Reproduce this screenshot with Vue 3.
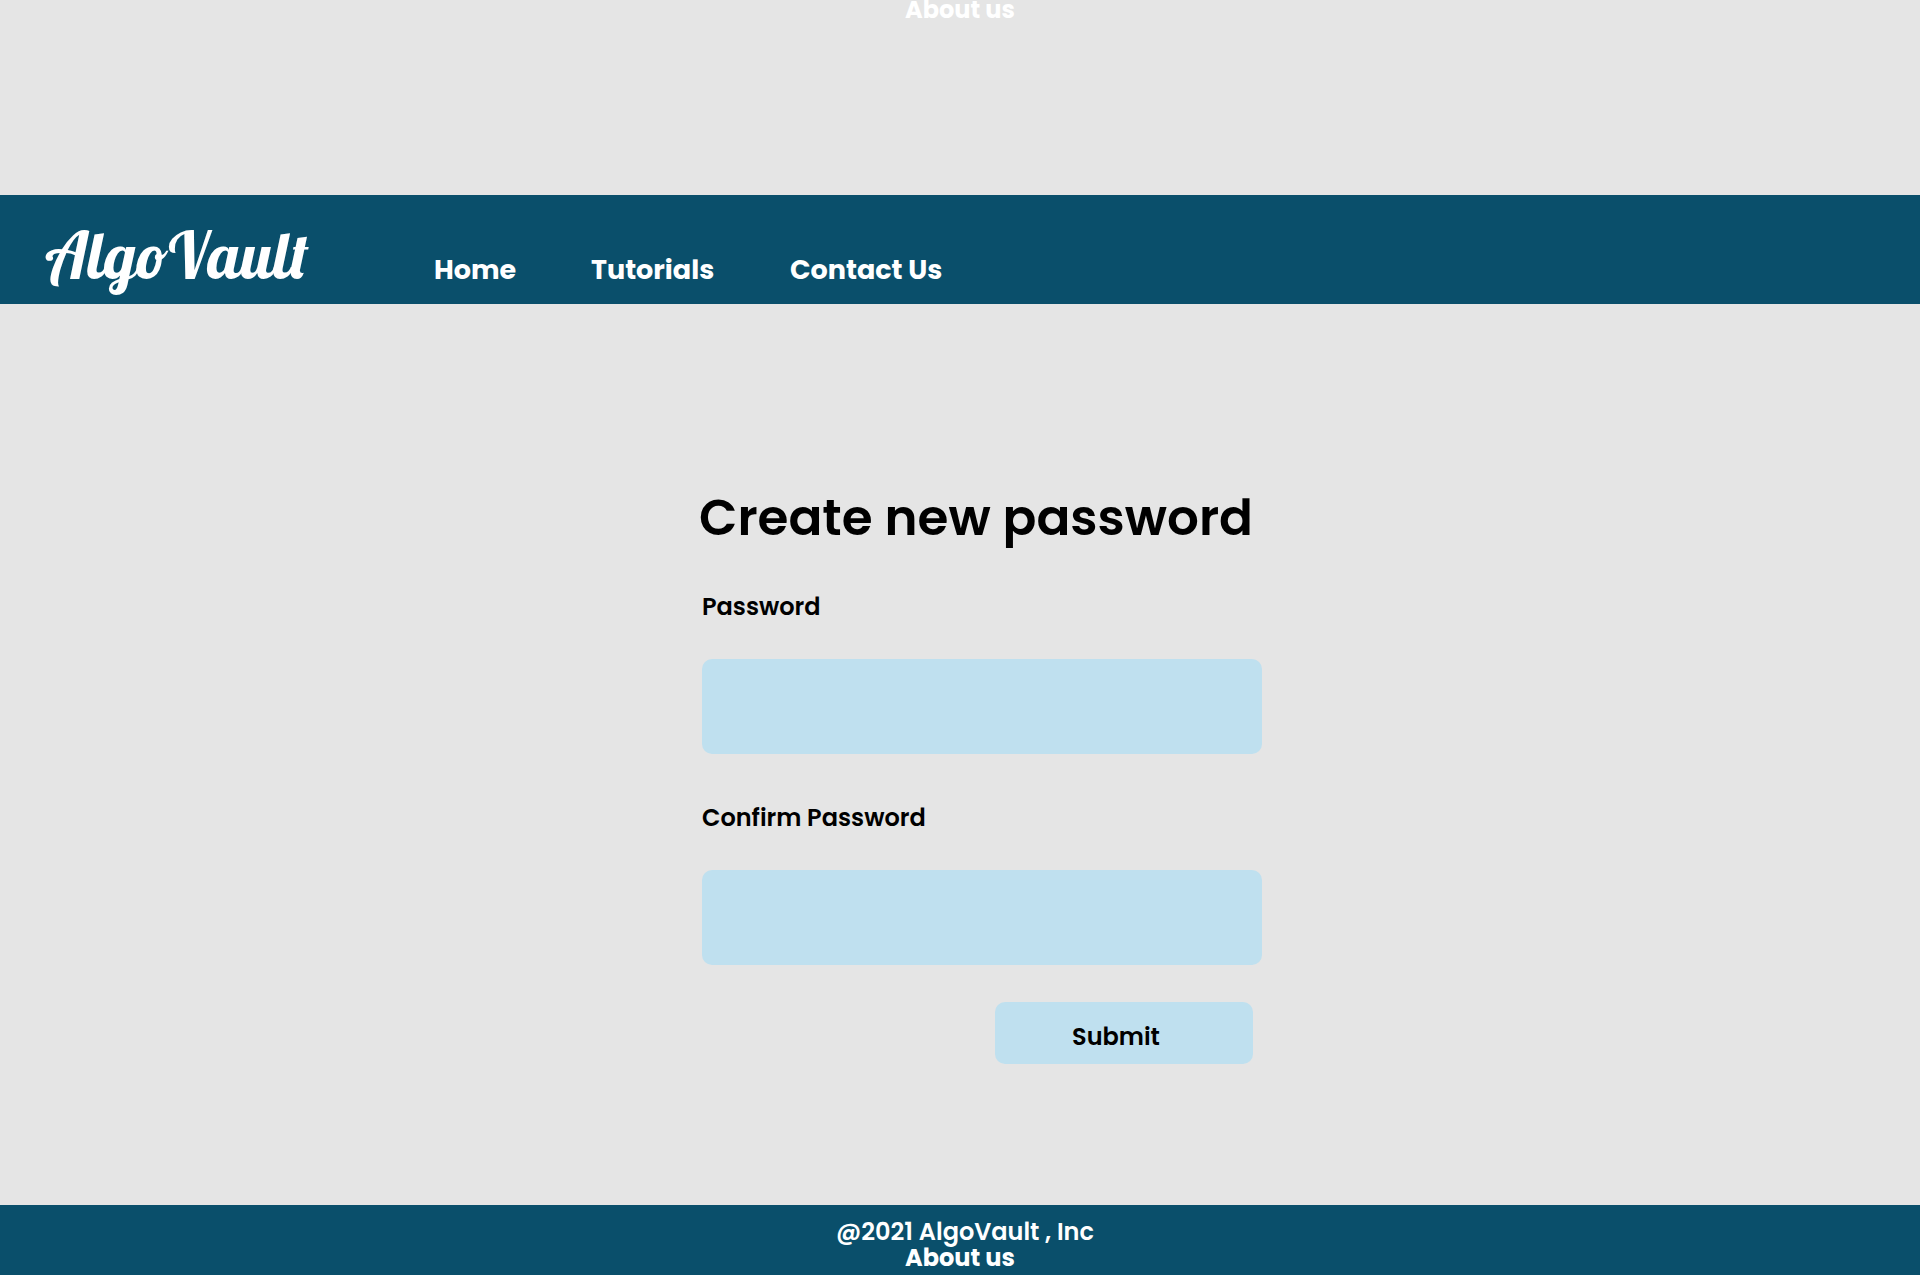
<script setup>
import { ref } from 'vue'

const links = ['Home', 'Tutorials', 'Contact Us']
const password = ref('')
const confirmation = ref('')
</script>

<template>
  <div class="page">
    <a class="about top-about" href="#about">About us</a>

    <header class="header">
      <a class="logo" href="#home">AlgoVault</a>
      <nav class="nav" aria-label="Main">
        <a v-for="link in links" :key="link" href="#">{{ link }}</a>
      </nav>
    </header>

    <main class="main">
      <form class="form" @submit.prevent>
        <h1>Create new password</h1>
        <label for="password">Password</label>
        <input id="password" v-model="password" type="password" />
        <label for="confirmation">Confirm Password</label>
        <input id="confirmation" v-model="confirmation" type="password" />
        <button type="submit">Submit</button>
      </form>
    </main>

    <footer class="footer">
      <p>@2021 AlgoVault , Inc</p>
      <a class="about" href="#about">About us</a>
    </footer>
  </div>
</template>

<style>
body {
  margin: 0;
  background: #e5e5e5;
}
</style>

<style scoped>
.page {
  display: flex;
  flex-direction: column;
  min-height: 100vh;
  color: #000;
  font-family: Poppins, Inter, sans-serif;
  font-size: 24px;
  font-weight: 600;
}

a {
  color: #fff;
  text-decoration: none;
}

.about {
  font-weight: 700;
}

.top-about {
  align-self: center;
  line-height: 20px;
}

.header {
  display: flex;
  align-items: baseline;
  margin-top: 175px;
  padding: 28px 45px 17px;
  background: #0a4f6b;
}

.logo {
  flex: 0 0 389px;
  font-family: Lobster, "Liberation Serif", serif;
  font-size: 64px;
  font-weight: 400;
  line-height: 64px;
}

.nav {
  display: grid;
  grid-template-columns: 157px 199px auto;
  font-size: 27px;
  font-weight: 700;
  line-height: 34px;
}

.main {
  display: flex;
  flex: 1;
  justify-content: center;
  padding: 182px 0 64px 44px;
}

.form {
  display: flex;
  flex-direction: column;
  width: 560px;
}

h1 {
  margin: 0 0 41px -3px;
  font-size: 50px;
  font-weight: 600;
  line-height: 64px;
  white-space: nowrap;
}

label {
  margin-bottom: 36px;
  line-height: 32px;
}

input {
  box-sizing: border-box;
  height: 95px;
  margin: 0 0 48px;
  padding: 0 24px;
  border: 0;
  border-radius: 10px;
  background: #bfe0ef;
  font: inherit;
}

#confirmation {
  margin-bottom: 37px;
}

button {
  align-self: flex-end;
  width: 258px;
  height: 62px;
  margin-right: 9px;
  padding: 6px 16px 0 0;
  border: 0;
  border-radius: 10px;
  background: #bfe0ef;
  color: inherit;
  font: inherit;
}

.footer {
  display: flex;
  flex-direction: column;
  align-items: center;
  padding: 14px 0 4px;
  background: #0a4f6b;
  color: #fff;
  line-height: 26px;
}

.footer p {
  margin: 0;
  padding-left: 10px;
}
</style>
